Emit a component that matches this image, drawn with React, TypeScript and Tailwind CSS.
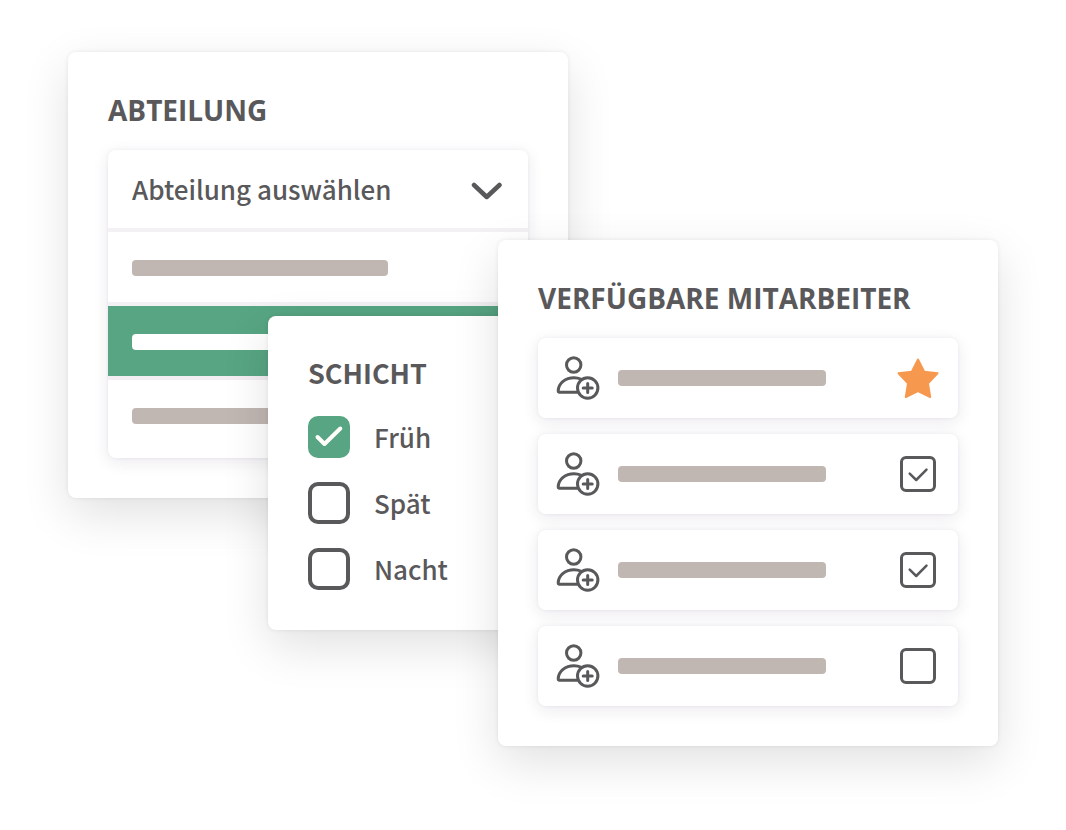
import { useState } from "react";
import type { ReactNode } from "react";

const bodyFont = "font-['Noto_Sans_CJK_SC','Noto_Sans',sans-serif]";
const cardShadow =
  "shadow-[0_16px_48px_rgba(0,0,0,0.12),0_0_4px_rgba(0,0,0,0.08)]";
const panelShadow =
  "shadow-[0_4px_16px_rgba(60,40,80,0.10),0_0_4px_rgba(60,40,80,0.06)]";

function Card({ className, children }: { className: string; children: ReactNode }) {
  return (
    <section className={`rounded-lg bg-white ${cardShadow} ${className}`}>
      {children}
    </section>
  );
}

function Bar({ className }: { className: string }) {
  return <div className={`h-4 rounded ${className}`} />;
}

function DepartmentCard() {
  return (
    <Card className="col-start-1 row-start-1 ml-[68px] mt-[52px] w-[500px] px-10 pb-10 pt-10">
      <h2 className="text-[28px] font-bold leading-9">
        <label htmlFor="abteilung">ABTEILUNG</label>
      </h2>
      <div className={`mt-[22px] overflow-hidden rounded-lg bg-white ${panelShadow}`}>
        <div className="grid items-center border-b-4 border-[#f3f1f4]">
          <select
            id="abteilung"
            className={`col-start-1 row-start-1 h-[78px] w-full appearance-none bg-transparent px-6 pb-[2px] text-[26px] font-medium ${bodyFont}`}
          >
            <option>Abteilung auswählen</option>
          </select>
          <svg
            aria-hidden="true"
            viewBox="0 0 32 20"
            className="pointer-events-none col-start-1 row-start-1 mr-[25px] mt-1 h-5 w-8 justify-self-end"
            fill="none"
            stroke="currentColor"
            strokeWidth="4.5"
            strokeLinecap="round"
            strokeLinejoin="round"
          >
            <path d="M3 4 15.700 16 28.500 4" />
          </svg>
        </div>
        <ul>
          <li className="border-b-4 border-[#f3f1f4] px-6 pb-[26px] pt-7">
            <Bar className="w-64 bg-[#c0b6b2]" />
          </li>
          <li className="border-b-4 border-[#f3eef1] bg-[#57a583] bg-clip-padding px-6 pb-[26px] pt-7">
            <Bar className="w-64 bg-white" />
          </li>
          <li className="px-6 pb-[34px] pt-7">
            <Bar className="w-64 bg-[#c0b6b2]" />
          </li>
        </ul>
      </div>
    </Card>
  );
}

function ShiftOption({ label, initial }: { label: string; initial: boolean }) {
  const [on, setOn] = useState(initial);
  return (
    <label className="flex items-center gap-6">
      <span className="grid size-[42px] place-items-center">
        <input
          type="checkbox"
          checked={on}
          onChange={() => setOn(!on)}
          className="col-start-1 row-start-1 size-[42px] appearance-none rounded-[10px] border-4 border-[#59585a] bg-white checked:border-[#57a583] checked:bg-[#57a583]"
        />
        {on && (
          <svg
            aria-hidden="true"
            viewBox="0 0 42 42"
            className="pointer-events-none col-start-1 row-start-1 size-[42px]"
            fill="none"
            stroke="#fffef8"
            strokeWidth="4"
            strokeLinecap="round"
            strokeLinejoin="round"
          >
            <path d="M9.5 21 16.5 28 32.300 12.500" />
          </svg>
        )}
      </span>
      <span className={`text-[26px] font-medium leading-[42px] ${bodyFont}`}>{label}</span>
    </label>
  );
}

function ShiftCard() {
  return (
    <Card className="col-start-1 row-start-1 ml-[268px] mt-[316px] w-[400px] self-start p-10">
      <h2 className={`text-[27px] font-bold leading-[34px] ${bodyFont}`}>SCHICHT</h2>
      <div className="mt-[26px] flex flex-col gap-6">
        <ShiftOption label="Früh" initial={true} />
        <ShiftOption label="Spät" initial={false} />
        <ShiftOption label="Nacht" initial={false} />
      </div>
    </Card>
  );
}

function PersonAddIcon() {
  return (
    <svg
      aria-hidden="true"
      viewBox="0 0 48 48"
      className="size-12"
      fill="none"
      stroke="currentColor"
      strokeWidth="3"
      strokeLinecap="round"
      strokeLinejoin="round"
    >
      <circle cx="19.700" cy="11" r="7.200" />
      <path d="M27.500 25.300C25 24.300 22.500 23.800 20 23.800 11.500 23.800 4.500 29 4.200 36.800Q4.200 38.200 5.600 38.200H23" />
      <circle cx="33.700" cy="34" r="10.200" />
      <path d="M33.700 29.500v9M29.200 34h9" />
    </svg>
  );
}

function StarButton() {
  return (
    <button type="button" aria-label="Favorit" className="grid size-11 place-items-center">
      <svg
        aria-hidden="true"
        viewBox="0 0 44 44"
        className="size-11"
        fill="#f7984f"
        stroke="#f7984f"
        strokeWidth="2"
        strokeLinejoin="round"
      >
        <path d="M22 3.500 28.200 15.800 41.500 17.300 32 27.300 34.200 41 22 35 9.800 41 12 27.300 2.500 17.300 15.800 15.800Z" />
      </svg>
    </button>
  );
}

function EmployeeCheck({ initial }: { initial: boolean }) {
  const [on, setOn] = useState(initial);
  return (
    <span className="grid size-11 place-items-center">
      <input
        type="checkbox"
        aria-label="Mitarbeiter"
        checked={on}
        onChange={() => setOn(!on)}
        className="col-start-1 row-start-1 size-9 appearance-none rounded-md border-3 border-[#59585a] bg-white"
      />
      {on && (
        <svg
          aria-hidden="true"
          viewBox="0 0 36 36"
          className="pointer-events-none col-start-1 row-start-1 size-9"
          fill="none"
          stroke="currentColor"
          strokeWidth="2.500"
          strokeLinecap="round"
          strokeLinejoin="round"
        >
          <path d="M9.700 17.700 16.200 24 26.500 13.700" />
        </svg>
      )}
    </span>
  );
}

function EmployeeRow({ children }: { children: ReactNode }) {
  return (
    <li className={`flex h-20 items-center rounded-lg bg-white px-4 ${panelShadow}`}>
      <PersonAddIcon />
      <Bar className="ml-4 w-52 bg-[#c0b6b2]" />
      <div className="ml-auto mr-[2px]">{children}</div>
    </li>
  );
}

function EmployeesCard() {
  return (
    <Card className="col-start-1 row-start-1 ml-[498px] mt-[240px] w-[500px] self-start p-10">
      <h2 className="whitespace-nowrap text-[28px] font-bold leading-9">VERFÜGBARE MITARBEITER</h2>
      <ul className="mt-[22px] flex flex-col gap-4">
        <EmployeeRow>
          <StarButton />
        </EmployeeRow>
        <EmployeeRow>
          <EmployeeCheck initial={true} />
        </EmployeeRow>
        <EmployeeRow>
          <EmployeeCheck initial={true} />
        </EmployeeRow>
        <EmployeeRow>
          <EmployeeCheck initial={false} />
        </EmployeeRow>
      </ul>
    </Card>
  );
}

export default function App() {
  return (
    <main className="grid min-h-screen items-start overflow-hidden bg-white pb-16 font-['Open_Sans','Noto_Sans',sans-serif] text-[#59585a]">
      <DepartmentCard />
      <ShiftCard />
      <EmployeesCard />
    </main>
  );
}
